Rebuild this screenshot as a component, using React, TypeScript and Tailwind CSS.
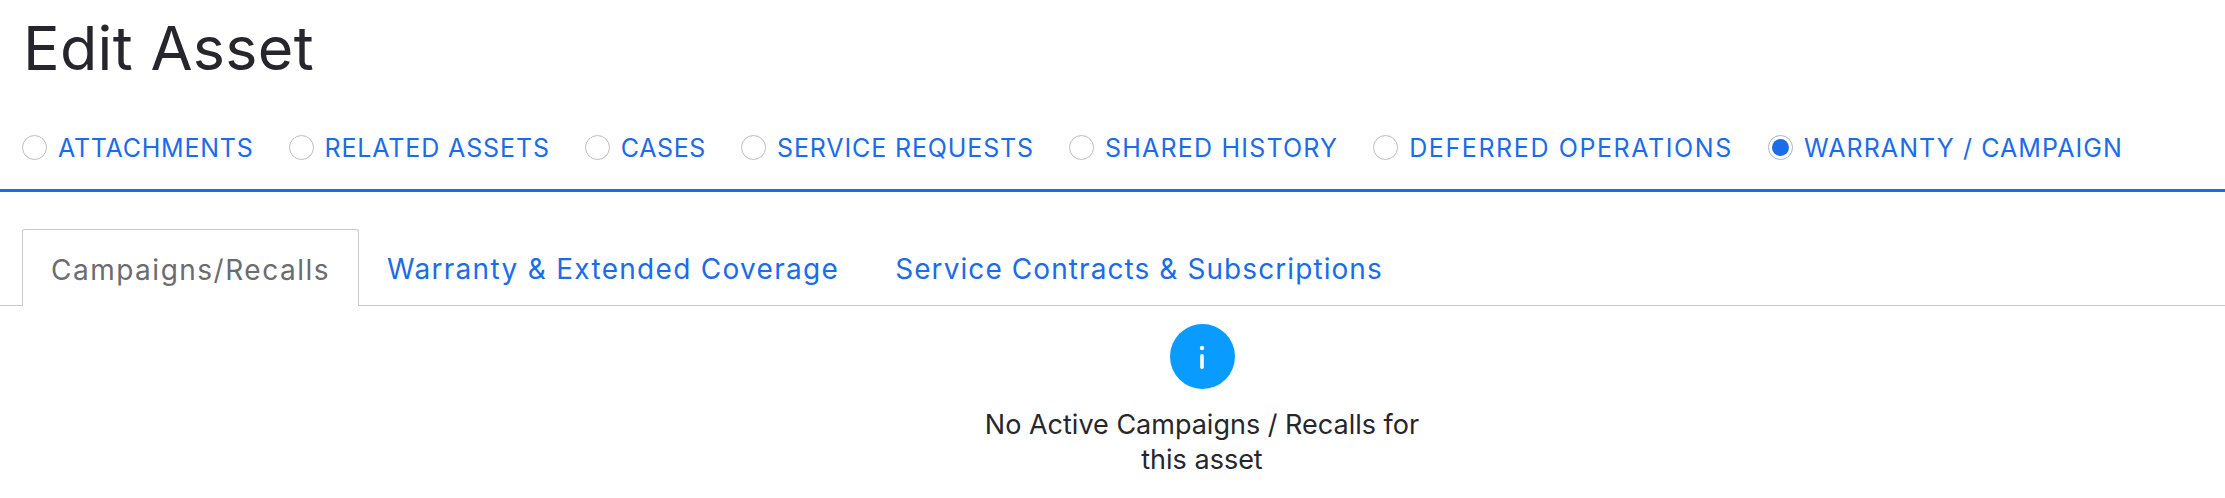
const radios = [
  { label: "ATTACHMENTS", tracking: "tracking-[0.76px]" },
  { label: "RELATED ASSETS", tracking: "tracking-[0.87px]" },
  { label: "CASES", tracking: "tracking-[0.6px]" },
  { label: "SERVICE REQUESTS", tracking: "tracking-[0.87px]" },
  { label: "SHARED HISTORY", tracking: "tracking-[1.2px]" },
  { label: "DEFERRED OPERATIONS", tracking: "tracking-[1.6px]" },
  { label: "WARRANTY / CAMPAIGN", tracking: "tracking-[1.08px]", checked: true },
];

export default function App() {
  return (
    <div className="w-[2225px] h-[498px] overflow-hidden bg-white font-['Inter',sans-serif]">
      <h1 className="pl-[23px] pt-[12px] h-[94px] text-[61px] leading-[73px] font-normal tracking-[0.3px] text-[#26262c]">Edit Asset</h1>
      <div className="flex items-center h-[86px] pl-[22px] gap-[35px] border-b-[3px] border-[#1a6ce8] mt-[12px]">
        {radios.map((r) => (
          <label key={r.label} className="flex items-center gap-[11px]">
            <span className={`flex items-center justify-center w-[25px] h-[25px] rounded-full border ${r.checked ? "border-[#a9b4c8]" : "border-[#bdbdbd]"}`}>
              {r.checked && <span className="w-[17px] h-[17px] rounded-full bg-[#1a6ce8]" />}
            </span>
            <span className={`text-[25px] leading-[30px] text-[#1a6ce8] whitespace-nowrap ${r.tracking}`}>{r.label}</span>
          </label>
        ))}
      </div>
      <div className="flex items-end h-[77px] mt-[37px] pl-[22px] border-b border-[#c9c9d4]">
        <div className="flex items-center h-[77px] pt-[4px] px-[28px] -mb-px bg-white border border-b-0 border-[#c9c9d4] rounded-t-[3px] text-[28px] tracking-[1.5px] text-[#6b6b70]">Campaigns/Recalls</div>
        <div className="flex items-center h-[76px] pt-[4px] px-[28px] text-[28px] tracking-[1.3px] text-[#1a6ce8] whitespace-nowrap">Warranty &amp; Extended Coverage</div>
        <div className="flex items-center h-[76px] pt-[4px] px-[28px] text-[28px] tracking-[1.08px] text-[#1a6ce8] whitespace-nowrap">Service Contracts &amp; Subscriptions</div>
      </div>
      <div className="flex flex-col items-center w-[450px] ml-[977px] pt-[18px]">
        <div className="flex items-center justify-center w-[65px] h-[65px] rounded-full bg-[#0a9bff]">
          <svg width="6" height="24" viewBox="0 0 6 24"><circle cx="3" cy="3" r="2.2" fill="#fff" /><rect x="1.2" y="9" width="3.6" height="15" rx="1.8" fill="#fff" /></svg>
        </div>
        <p className="mt-[18px] text-center text-[27px] leading-[35px] text-[#26262c]">No Active Campaigns / Recalls for this asset</p>
      </div>
    </div>
  );
}
